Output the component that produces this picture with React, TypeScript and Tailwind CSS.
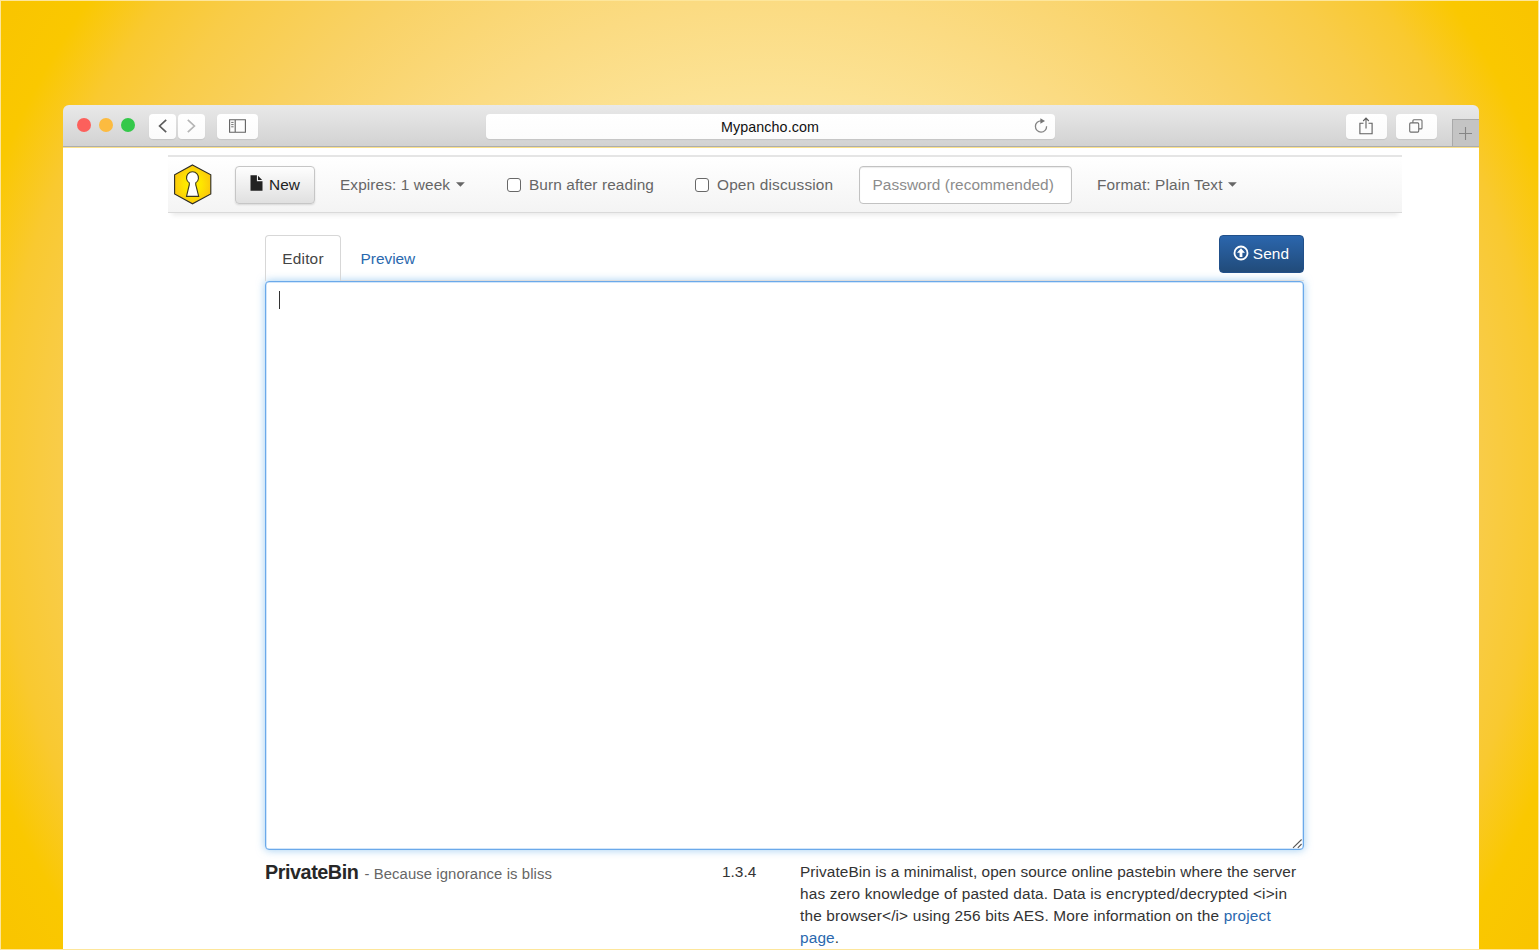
import type { ReactNode } from "react";

function Caret() {
  return (
    <svg className="h-[5px] w-[9px]" viewBox="0 0 9 5">
      <path d="M0 0.3h8.8L4.4 4.7z" fill="#666" />
    </svg>
  );
}

function ChromeButton({ className, children }: { className: string; children: ReactNode }) {
  return (
    <button
      className={`flex h-[25px] items-center justify-center rounded-[4px] bg-gradient-to-b from-white to-[#fbfbfb] shadow-[0_1px_1px_rgba(0,0,0,0.08)] ${className}`}
    >
      {children}
    </button>
  );
}

function TitleBar() {
  return (
    <header className="flex h-[42px] shrink-0 rounded-t-[6px] border-b border-[#adadad] bg-gradient-to-b from-[#e9e9e9] to-[#d2d2d2] pt-[8.5px]">
      <div className="mt-[4.5px] ml-[14px] flex h-[14px] gap-[8px]">
        <span className="size-[14px] rounded-full bg-[#fc605c]" />
        <span className="size-[14px] rounded-full bg-[#fcbb40]" />
        <span className="size-[14px] rounded-full bg-[#34c84a]" />
      </div>
      <ChromeButton className="ml-[14px] w-[27px]">
        <svg className="h-[14px] w-[9px]" viewBox="0 0 9 14" fill="none" stroke="#5c5c5c" strokeWidth="1.7">
          <path d="M8.2 0.8L1.6 7l6.6 6.2" />
        </svg>
      </ChromeButton>
      <ChromeButton className="ml-[2px] w-[27px]">
        <svg className="h-[14px] w-[9px]" viewBox="0 0 9 14" fill="none" stroke="#b5b5b5" strokeWidth="1.7">
          <path d="M0.8 0.8L7.4 7 0.8 13.2" />
        </svg>
      </ChromeButton>
      <ChromeButton className="ml-[12px] w-[41px]">
        <svg className="h-[14px] w-[17px]" viewBox="0 0 17 14" fill="none" stroke="#616161" strokeWidth="1.1">
          <path d="M0.6 0.8h15.8v12.4H0.6zM6.2 0.8v12.4" />
          <path d="M2.2 3.4h2.4M2.2 5.6h2.4M2.2 7.8h2.4" strokeWidth="0.9" />
        </svg>
      </ChromeButton>
      <div className="ml-[228px] flex h-[25px] w-[569px] items-center rounded-[4px] bg-gradient-to-b from-white to-[#fcfcfc] pr-[7px] pl-[15px] shadow-[0_1px_1px_rgba(0,0,0,0.08)]">
        <span className="flex-1 pt-[1px] pl-[6px] text-center text-[14.3px] leading-[22px] tracking-[0.08px] text-[#111]">
          Mypancho.com
        </span>
        <svg className="mb-[2px] h-[15px] w-[14px]" viewBox="0 0 14 15" fill="none" stroke="#848484" strokeWidth="1.3">
          <path d="M7.4 2.9A5.6 5.6 0 1 0 12.6 8.2" />
          <path d="M6.4 0.2L11 2.9 6.4 5.7z" fill="#747474" stroke="none" />
        </svg>
      </div>
      <ChromeButton className="ml-[291px] w-[41px]">
        <svg className="h-[18px] w-[14px]" viewBox="0 0 14 18" fill="none" stroke="#5e5e5e" strokeWidth="1.1">
          <path d="M4.5 6.2H0.9v10.6h12.2V6.2H9.5M7 11.5V1.2M4.2 4L7 1.1 9.8 4" />
        </svg>
      </ChromeButton>
      <ChromeButton className="ml-[9px] w-[41px]">
        <svg className="h-[14px] w-[14px]" viewBox="0 0 14 14" fill="none" stroke="#6e6e6e" strokeWidth="1.1">
          <rect x="0.7" y="3.9" width="9" height="9.2" rx="1" />
          <path d="M3.9 3.7V1.7a1 1 0 0 1 1-1H12a1 1 0 0 1 1 1v7.2a1 1 0 0 1-1 1h-2" />
        </svg>
      </ChromeButton>
      <button className="mt-[5.5px] ml-auto flex h-[27px] w-[27px] items-center justify-center border-t border-l border-[#a9a9a9] bg-[#c4c4c4]">
        <svg className="size-[13px]" viewBox="0 0 13 13" stroke="#858585" strokeWidth="1.1">
          <path d="M6.5 0v13M0 6.5h13" />
        </svg>
      </button>
    </header>
  );
}

function Logo() {
  return (
    <svg className="ml-[6px] h-[41px] w-[38px]" viewBox="0 0 38 41">
      <defs>
        <radialGradient id="gold">
          <stop offset="0" stopColor="#fff200" />
          <stop offset="0.5" stopColor="#fee500" />
          <stop offset="1" stopColor="#fbc90b" />
        </radialGradient>
      </defs>
      <path d="M18.5 1L36.8 10.8V30L18.5 39.8 0.6 30V10.8z" fill="url(#gold)" stroke="#2c2b25" strokeWidth="1.1" />
      <path
        d="M15.3 18.9A6 6 0 1 1 21.7 18.9C21.5 20.6 22 22 22.6 24L24.7 32.4H12.5L14.5 24C15.1 22 15.6 20.6 15.3 18.9z"
        fill="#fff"
        stroke="#3c381d"
        strokeWidth="1.1"
      />
    </svg>
  );
}

function CheckOption({ label, className }: { label: string; className: string }) {
  return (
    <label className={`flex items-center gap-[8px] whitespace-nowrap ${className}`}>
      <input
        type="checkbox"
        className="size-[14px] shrink-0 appearance-none rounded-[3px] border border-[#686868] bg-white"
      />
      {label}
    </label>
  );
}

function NavBar() {
  return (
    <nav className="mt-[7px] ml-[105.5px] flex h-[58px] w-[1234px] shrink-0 items-center border-t-2 border-b border-t-[#e5e5e5] border-b-[#dadada] bg-gradient-to-b from-white to-[#f4f4f4] tracking-[0.1px] text-[#666] shadow-[0_6px_5px_-4px_rgba(0,0,0,0.09)]">
      <Logo />
      <button className="ml-[23px] flex h-[38px] w-[80px] items-center gap-[6px] rounded-[4px] border border-[#c6c6c6] bg-gradient-to-b from-[#fefefe] to-[#e0e0e0] pl-[14px] text-[#222] shadow-[0_1px_2px_rgba(0,0,0,0.12)]">
        <svg className="mb-[3px] h-[16px] w-[13px]" viewBox="0 0 13 16" fill="#222">
          <path d="M0.5 0.3H6.9V6.3H12.5V15.7H0.5zM8 0.8L12.1 5.1H8z" />
        </svg>
        New
      </button>
      <div className="ml-[25px] flex w-[125px] items-center justify-between whitespace-nowrap">
        Expires: 1 week <Caret />
      </div>
      <CheckOption label="Burn after reading" className="ml-[42px] w-[147px]" />
      <CheckOption label="Open discussion" className="ml-[41px] w-[139px] tracking-[0.17px]" />
      <input
        placeholder="Password (recommended)"
        className="ml-[24.5px] h-[38px] w-[213px] rounded-[4px] border border-[#c2c2c2] bg-white px-[13px] tracking-[0.04px] shadow-[inset_0_1px_1px_rgba(0,0,0,0.08)] placeholder:text-[#8c8c8c]"
      />
      <div className="ml-[25.5px] flex w-[140px] items-center justify-between whitespace-nowrap">
        Format: Plain Text <Caret />
      </div>
    </nav>
  );
}

function EditorHead() {
  return (
    <div className="mt-[22px] flex h-[46px] justify-between">
      <div className="flex flex-1 items-end">
        <div className="flex h-full w-[76px] items-center justify-center rounded-t-[4px] border border-b-0 border-[#d7d7d7] tracking-[0.2px] text-[#444]">
          Editor
        </div>
        <div className="flex h-full flex-1 items-center border-b border-[#ddd] pt-[2px] pl-[19.5px] text-[#2a68ae]">
          Preview
        </div>
      </div>
      <div className="h-full border-b border-[#ddd]">
        <button className="flex h-[38px] w-[85px] items-center justify-center gap-[4px] rounded-[4px] border border-[#21508a] bg-gradient-to-b from-[#2b66ad] to-[#214b7a] tracking-[0.1px] text-white">
          <svg className="mb-[2px] size-[16px]" viewBox="0 0 16 16">
            <circle cx="8" cy="8" r="6.5" fill="none" stroke="#fff" strokeWidth="1.8" />
            <path d="M8 3.2L12 7.7H9.4V12H6.6V7.7H4z" fill="#fff" />
          </svg>
          Send
        </button>
      </div>
    </div>
  );
}

function EditorArea() {
  return (
    <div className="flex h-[569px] shrink-0 items-stretch justify-between rounded-[4px] border border-[#6ba9ea] bg-white shadow-[inset_0_0_0_0.5px_#a5cdf5,0_0_8px_rgba(102,175,233,0.65)]">
      <span className="mt-[9px] ml-[13px] h-[18px] w-px bg-[#333]" />
      <svg className="size-[11px] self-end" viewBox="0 0 11 11" stroke="#555" strokeWidth="1.1">
        <path d="M1 9.8L9.6 1.5M5.8 9.8L9.6 6" />
      </svg>
    </div>
  );
}

function Footer() {
  return (
    <footer className="mt-[11px] flex text-[#333]">
      <h4 className="w-[457px] text-[19.8px] leading-[22px] font-bold tracking-[-0.45px] whitespace-nowrap text-[#272727]">
        PrivateBin{" "}
        <small className="pl-[1px] text-[14.85px] font-normal tracking-[0.1px] text-[#666]">
          - Because ignorance is bliss
        </small>
      </h4>
      <p className="w-[78px]">1.3.4</p>
      <p className="whitespace-nowrap">
        <span className="tracking-[0.07px]">
          PrivateBin is a minimalist, open source online pastebin where the server
        </span>
        <br />
        <span className="tracking-[0.155px]">
          has zero knowledge of pasted data. Data is encrypted/decrypted &lt;i&gt;in
        </span>
        <br />
        <span className="tracking-[0.145px]">
          the browser&lt;/i&gt; using 256 bits AES. More information on the{" "}
          <a className="text-[#2a68ae]">
            project
            <br />
            page
          </a>
          .
        </span>
      </p>
    </footer>
  );
}

export default function App() {
  return (
    <div className="h-[950px] w-[1539px] overflow-hidden border border-[#fde69b] bg-[radial-gradient(circle_at_50%_50%,#fdedb8_0,#fce396_375px,#fbdb82_475px,#f9d266_600px,#f9cc48_710px,#f9c930_770px,#fac800_830px,#f9c400_905px)] [font-family:'Liberation_Sans',Arial,sans-serif] text-[15.4px] leading-[22px]">
      <div className="mt-[104px] ml-[61.5px] flex h-[850px] w-[1416px] flex-col">
        <TitleBar />
        <div className="flex flex-1 flex-col border-t border-[#fbe18b] bg-white">
          <NavBar />
          <main className="ml-[202.5px] w-[1038.5px]">
            <EditorHead />
            <EditorArea />
            <Footer />
          </main>
        </div>
      </div>
    </div>
  );
}
